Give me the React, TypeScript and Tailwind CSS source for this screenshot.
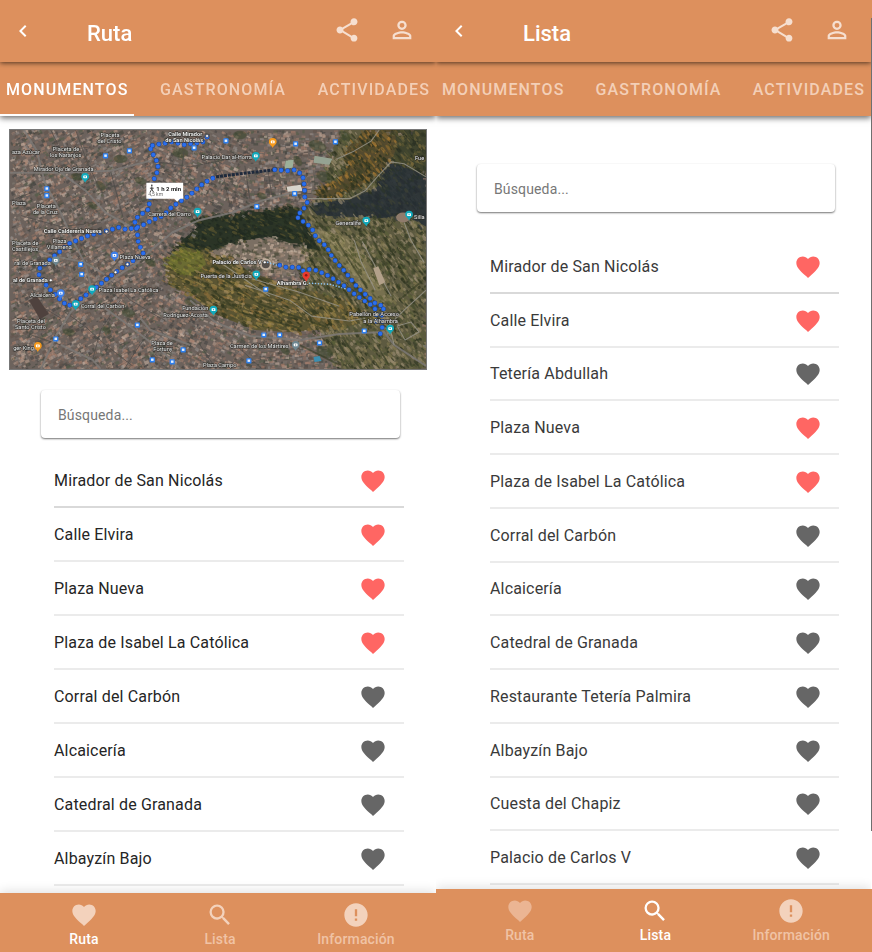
import React from "react";
import {
  MdChevronLeft,
  MdShare,
  MdPersonOutline,
  MdFavorite,
  MdSearch,
  MdError,
} from "react-icons/md";

type Point = [number, number];
type Place = { name: string; liked: boolean };

/* ---------- Map drawing ---------- */

const MAP = { x: 9, y: 129, w: 418, h: 240 };

const zones: { shape: Point[]; base: string; palette: string[]; round: boolean }[] = [
  {
    // eastern hills
    shape: [[345, 129], [427, 129], [427, 370], [340, 370], [325, 345], [290, 240], [305, 205], [330, 190], [325, 160]],
    base: "#5d5a40",
    palette: ["#343a26", "#80774f", "#474d2f", "#8f8360", "#9a8c71", "#2c331e", "#5a6039", "#6d684a"],
    round: true,
  },
  {
    // autumn slope
    shape: [[345, 150], [366, 129], [398, 129], [400, 145], [385, 168], [365, 185], [330, 200], [310, 192], [335, 180], [348, 168]],
    base: "#544a2e",
    palette: ["#8c6a2e", "#2c321f", "#6f5b30", "#3e4127", "#a87a34", "#252c1c", "#4a4a2c"],
    round: true,
  },
  {
    // northern woods on the right
    shape: [[395, 129], [427, 129], [427, 178], [392, 161], [398, 145]],
    base: "#3f432e",
    palette: ["#2f3525", "#64603a", "#7a6a3c", "#262c20", "#484b30", "#54522f"],
    round: true,
  },
  {
    // shaded valley
    shape: [[392, 161], [427, 175], [427, 226], [405, 214], [380, 218], [345, 216], [318, 215], [308, 203], [350, 199], [375, 188]],
    base: "#2f3638",
    palette: ["#262d31", "#333b3d", "#2b342b", "#3d4234", "#272f33", "#2a3236"],
    round: true,
  },
  {
    // terraced gardens
    shape: [[305, 226], [350, 236], [368, 262], [392, 300], [378, 304], [345, 270], [318, 240]],
    base: "#77704f",
    palette: ["#8b8358", "#5c5f38", "#a09370", "#474c2b", "#7c7650", "#94895f"],
    round: true,
  },
  {
    // north bank of the palace hill
    shape: [[192, 217], [232, 213], [262, 208], [298, 205], [308, 228], [320, 250], [300, 246], [268, 239], [235, 244], [212, 250], [190, 250], [166, 256], [182, 240], [198, 226]],
    base: "#2b3426",
    palette: ["#202a1f", "#333e28", "#5c562f", "#1f2820", "#2d3828", "#283229"],
    round: true,
  },
  {
    // wood south of the palace
    shape: [[163, 262], [185, 248], [225, 252], [250, 272], [300, 288], [345, 300], [375, 318], [345, 328], [290, 332], [255, 330], [215, 314], [192, 296], [168, 284]],
    base: "#5b5533",
    palette: ["#85753a", "#3d4127", "#9c854a", "#2d331c", "#69603a", "#a1895d", "#4c4b2e", "#8d6f3b"],
    round: true,
  },
  {
    // bright grove on the west tip
    shape: [[164, 258], [182, 246], [202, 250], [206, 264], [192, 276], [176, 272]],
    base: "#6b6c33",
    palette: ["#84823a", "#5d6426", "#96893c", "#454d20", "#727531", "#59552f"],
    round: true,
  },
  {
    // palace buildings
    shape: [[208, 252], [232, 242], [268, 236], [303, 246], [306, 256], [290, 276], [262, 272], [245, 262]],
    base: "#7b6f63",
    palette: ["#c4ae9d", "#94806f", "#4e4f3b", "#cdb9a8", "#3d4230", "#a38b7a", "#5f5a49"],
    round: false,
  },
];

const cityPalette = [
  "#a2806f", "#716864", "#474544", "#b39887", "#8b7062", "#8f8986", "#c0ab9c", "#43473f", "#62544c", "#a67c69", "#555e4a", "#7b736b",
];

function inside([px, py]: Point, shape: Point[]) {
  let hit = false;
  for (let i = 0, j = shape.length - 1; i < shape.length; j = i++) {
    const [xi, yi] = shape[i];
    const [xj, yj] = shape[j];
    if (yi > py !== yj > py && px < ((xj - xi) * (py - yi)) / (yj - yi) + xi) hit = !hit;
  }
  return hit;
}

function makeTerrain() {
  let seed = 4211;
  const rand = () => {
    seed = (seed * 1664525 + 1013904223) % 4294967296;
    return seed / 4294967296;
  };
  const shapes: React.ReactNode[] = [];
  for (let i = 0; i < 14000; i++) {
    const x = MAP.x + rand() * MAP.w;
    const y = MAP.y + rand() * MAP.h;
    const probe: Point = [x + (rand() - 0.5) * 9, y + (rand() - 0.5) * 7];
    let zone = undefined as (typeof zones)[number] | undefined;
    for (const z of zones) if (inside(probe, z.shape)) zone = z;
    const palette = zone ? zone.palette : cityPalette;
    const fill = palette[Math.floor(rand() * palette.length)];
    if (zone && zone.round) {
      shapes.push(
        <ellipse
          key={i}
          cx={x}
          cy={y}
          rx={1 + rand() * 2.6}
          ry={0.6 + rand() * 1.1}
          fill={fill}
          opacity={0.65}
          transform={`rotate(${x > 300 ? 50 : 25} ${x} ${y})`}
        />,
      );
    } else {
      const angle = x < 150 ? -32 : x < 250 ? 18 : -8;
      shapes.push(
        <rect
          key={i}
          x={x}
          y={y}
          width={1.4 + rand() * 3.6}
          height={1.2 + rand() * 2.4}
          fill={fill}
          opacity={0.62}
          transform={`rotate(${angle + rand() * 12} ${x} ${y})`}
        />,
      );
    }
  }
  return shapes;
}

const terrain = makeTerrain();

const streets = [
  "M23 129 L36 150 L44 182 L60 212 L74 244 L84 262",
  "M9 172 L60 172 L110 170 L150 160",
  "M60 172 L85 190 L105 212 L130 226",
  "M9 240 L50 255 L84 262 L104 274",
  "M84 262 L92 292 L70 312 L55 336 L40 369",
  "M100 305 L128 325 L160 350 L180 369",
  "M60 345 L92 360 L100 369",
  "M150 250 L172 232 L198 220 L232 212 L262 200 L300 190",
  "M150 250 L135 264 L104 284 L90 296",
  "M190 300 L215 322 L250 336 L300 340 L340 334 L385 332 L395 345 L427 366",
  "M140 318 L150 330 L190 345",
];

const alleys = [
  "M75 129 L86 160 L100 190 M9 200 L36 190 M50 129 L60 150 L90 146",
  "M110 170 L118 200 L124 222 M150 160 L190 166 L230 158 M180 180 L184 150",
  "M20 215 L60 226 L100 222 M30 300 L60 318 M110 240 L124 252 L112 268",
  "M210 150 L224 178 L230 205 M245 165 L250 198 M268 168 L272 194",
  "M104 274 L130 300 L160 318 M120 300 L100 330 L92 360 M150 330 L136 350 L124 369",
  "M64 312 L84 326 L104 344 L132 366 M30 335 L60 345 M200 345 L216 369 M236 345 L262 369",
];

const trails = [
  "M308 198 L350 198 L366 190 L378 176 L392 161 L405 163 L427 176",
  "M380 129 L372 140 L355 150 L338 158",
  "M355 240 L362 262 L376 290 M363 241 L376 266 L392 296",
  "M405 222 L412 240 L425 262",
  "M245 285 L290 300 L312 316 L350 321 L366 318",
  "M220 262 L252 284 L270 296 M250 278 L300 292 L340 306",
  "M395 345 L390 325 L405 310 L427 290",
  "M398 326 L412 322 L420 332 L406 340 L398 326",
];

const groves: { at: Point; r: number }[] = [
  { at: [120, 158], r: 7 }, { at: [100, 185], r: 6 }, { at: [76, 176], r: 6 }, { at: [180, 152], r: 8 },
  { at: [140, 180], r: 6 }, { at: [92, 205], r: 5 }, { at: [128, 313], r: 7 }, { at: [150, 262], r: 6 },
  { at: [240, 134], r: 7 }, { at: [318, 145], r: 9 }, { at: [325, 176], r: 9 }, { at: [262, 195], r: 5 },
  { at: [345, 135], r: 7 }, { at: [298, 160], r: 6 }, { at: [68, 332], r: 6 }, { at: [106, 330], r: 5 },
  { at: [190, 302], r: 6 }, { at: [195, 290], r: 6 }, { at: [325, 352], r: 9 }, { at: [285, 350], r: 6 },
];

const routes = [
  "M207 136 L202 142 L194 142 L185 144 L172 141 L161 143 L149 145 L153 154 L158 163 L157 171 L153 180 L149 202 L149 208 L134 219 L137 233 L138 243 L143 253 L133 260 L115 272 L92 290 L74 303 L67 306 L59 299 L48 288 L38 276 L39 268 L53 256 L69 243 L88 235 L111 229 L118 227 L126 229 L140 226 L151 220 L163 215 L172 206 L189 195 L204 182 L216 176",
  "M275 169 L288 170 L295 169 L303 174 L305 187 L305 196 L308 201 L305 207 L297 216 L302 220 L312 227 L317 238 L327 246 L333 257 L346 272 L358 287 L377 304 L385 306 L382 317 L384 324 L381 334",
  "M280 265 L286 267 L299 267 L302 271 L307 269 L317 270 L328 275 L344 285 L354 293 L364 300 L372 305 L377 310 L377 323",
];

const stops: Point[] = [
  [105, 155], [129, 150], [194, 147], [46, 188], [46, 195], [226, 140], [296, 143], [336, 141], [295, 193], [257, 206],
  [80, 264], [81, 274], [137, 325], [55, 339], [152, 360], [183, 350], [172, 362], [266, 289], [264, 335], [280, 335],
  [320, 343], [365, 331], [249, 361],
];

const pins: { at: Point; color: string }[] = [
  { at: [84.5, 176], color: "#11a9bb" },
  { at: [197.5, 211], color: "#11a9bb" },
  { at: [256, 155], color: "#11a9bb" },
  { at: [273, 141], color: "#f69a1c" },
  { at: [367, 220], color: "#11a9bb" },
  { at: [410, 214], color: "#11a9bb" },
  { at: [114, 255], color: "#3f7fe8" },
  { at: [60, 293], color: "#3f7fe8" },
  { at: [55, 260], color: "#6e8790" },
  { at: [91.5, 289], color: "#11a9bb" },
  { at: [75, 304], color: "#11a9bb" },
  { at: [37, 346], color: "#f69a1c" },
  { at: [213.5, 309.5], color: "#11a9bb" },
  { at: [256.5, 274], color: "#11a9bb" },
  { at: [296, 345], color: "#6e8790" },
  { at: [391, 328.5], color: "#11a9bb" },
];

const labels: { text: string; x: number; y: number; bold?: boolean; end?: boolean }[] = [
  { text: "Calle Mirador", x: 168, y: 135, bold: true },
  { text: "de San Nicolás", x: 165, y: 141, bold: true },
  { text: "Placeta", x: 100, y: 136 },
  { text: "del Cristo", x: 97, y: 142 },
  { text: "aza Azúcar", x: 39, y: 153, end: true },
  { text: "Placeta de", x: 52, y: 150 },
  { text: "los Naranjos", x: 49, y: 156 },
  { text: "Mirador Ojo de Granada", x: 33, y: 170 },
  { text: "Placeta", x: 36, y: 207 },
  { text: "de la Cruz", x: 32, y: 213 },
  { text: "Plaza", x: 11, y: 204 },
  { text: "Calle Calderería Nueva", x: 43, y: 233, bold: true },
  { text: "Placeta de", x: 11, y: 245 },
  { text: "Castillejos", x: 11, y: 251 },
  { text: "Plaza", x: 52, y: 243 },
  { text: "Villamena", x: 46, y: 249 },
  { text: "ral de Granada", x: 50, y: 265, end: true },
  { text: "al de Granada", x: 47, y: 282, bold: true, end: true },
  { text: "Alcaicería", x: 54, y: 297, end: true },
  { text: "Plaza Nueva", x: 119, y: 259 },
  { text: "Plaza Isabel La Católica", x: 98, y: 292 },
  { text: "Corral del Carbón", x: 80, y: 308 },
  { text: "Placeta del", x: 16, y: 323 },
  { text: "Santo Cristo", x: 14, y: 329 },
  { text: "ger King", x: 33, y: 350, end: true },
  { text: "Carrera del Darro", x: 148, y: 215 },
  { text: "Palacio Dar al-Horra", x: 252, y: 158, end: true },
  { text: "Generalife", x: 336, y: 224 },
  { text: "Silla", x: 415, y: 218 },
  { text: "Fue", x: 416, y: 159 },
  { text: "Palacio de Carlos V", x: 262, y: 264, bold: true, end: true },
  { text: "Puerta de la Justicia", x: 252, y: 278, end: true },
  { text: "Alhambra G.", x: 277, y: 285, bold: true },
  { text: "Fundación", x: 182, y: 310 },
  { text: "Rodríguez-Acosta", x: 163, y: 317 },
  { text: "Pabellón de Acceso", x: 350, y: 316 },
  { text: "a la Alhambra", x: 364, y: 323 },
  { text: "Carmen de los Mártires", x: 230, y: 348 },
  { text: "Plaza de", x: 151, y: 345 },
  { text: "Fortuny", x: 153, y: 351 },
  { text: "Plaza Campo", x: 203, y: 367 },
];

const toPoints = (shape: Point[]) => shape.map((p) => p.join(",")).join(" ");

function RouteMap() {
  return (
    <svg
      viewBox="9 129 418 240"
      preserveAspectRatio="xMidYMid slice"
      role="img"
      aria-label="Mapa de la ruta por Granada"
      className="block w-full border border-[#777777] font-['Roboto',sans-serif]"
    >
      <rect x={9} y={129} width={418} height={241} fill="#6c625c" />
      {zones.map((z, i) => (
        <polygon key={i} points={toPoints(z.shape)} fill={z.base} />
      ))}
      {terrain}
      <g fill="#3a452b" opacity={0.55}>
        {groves.map(({ at: [x, y], r }) => (
          <ellipse key={`${x}-${y}`} cx={x} cy={y} rx={r} ry={r * 0.6} transform={`rotate(${x % 60} ${x} ${y})`} />
        ))}
      </g>
      <g fill="none" stroke="#4f4c49" strokeWidth={1} opacity={0.75}>
        {alleys.map((d) => <path key={d} d={d} />)}
      </g>
      <g fill="none" stroke="#7d7976" strokeWidth={2} opacity={0.85} strokeLinejoin="round">
        {streets.map((d) => <path key={d} d={d} />)}
      </g>
      <g fill="none" stroke="#98958a" strokeWidth={1.1} opacity={0.8} strokeLinejoin="round">
        {trails.map((d) => <path key={d} d={d} />)}
      </g>
      <path
        d="M316 246 L368 326 M325 242 L372 306 M336 238 L368 288 M372 236 L400 290 M384 236 L408 280 M396 235 L424 275 M300 345 L340 365 M345 340 L362 365 M400 300 L424 280 M378 345 L390 366 M220 276 L260 304 L330 328 M200 280 L240 312 L300 328"
        fill="none"
        stroke="#30361f"
        strokeWidth={1.8}
        opacity={0.55}
      />
      <polygon points="286,160 294,159 293,167 285,168" fill="#9db09a" />
      <polygon points="315,155 333,158 330,164 314,162" fill="#95a292" />
      <polygon points="287,186 301,184 303,190 288,191" fill="#d8d4cb" />
      <polygon points="374,268 379,266 386,282 380,285" fill="#b3a18a" />
      <ellipse cx={404} cy={217} rx={7} ry={5} fill="#8f7b6c" />
      <circle cx={266} cy={264} r={5} fill="#56504b" stroke="#c1b09e" strokeWidth={2} />
      <polygon points="28,300 36,296 48,314 39,319" fill="#4f423e" />
      <polygon points="314,357 320,356 322,361 315,362" fill="#3c8fb0" />
      <path d="M268 262 L278 265 M310 283 L330 284 L348 289" fill="none" stroke="#8ec5f5" strokeWidth={1.6} strokeDasharray="0 3" strokeLinecap="round" />
      <path d="M216 176 L240 173 L275 169" fill="none" stroke="#1f2a3c" strokeWidth={3} strokeDasharray="3 1" />
      <g fill="none" strokeLinecap="round" strokeDasharray="0 6.5">
        {routes.map((d) => (
          <g key={d}>
            <path d={d} stroke="#1a459c" strokeWidth={5} />
            <path d={d} stroke="#2b6fee" strokeWidth={4} />
          </g>
        ))}
      </g>
      {stops.map(([x, y]) => (
        <g key={`${x}-${y}`}>
          <rect x={x - 2.6} y={y - 2.6} width={5.2} height={5.2} rx={0.8} fill="#2d7fee" />
          <rect x={x - 1.3} y={y - 1.4} width={2.6} height={2.4} fill="#e4effd" />
        </g>
      ))}
      {[[207, 135], [106, 231], [50, 280], [127, 264], [115, 272], [265, 262]].map(([x, y]) => (
        <circle key={`${x}-${y}`} cx={x} cy={y} r={1.5} fill="#ffffff" stroke="#333333" strokeWidth={0.6} />
      ))}
      {pins.map(({ at: [x, y], color }) => (
        <g key={`${x}-${y}`}>
          <path d={`M${x - 3.9} ${y} a3.9 3.9 0 1 1 7.8 0 c0 2.4 -2.6 3 -3.9 6 c-1.3 -3 -3.9 -3.6 -3.9 -6z`} fill={color} />
          <rect x={x - 1.9} y={y - 1.4} width={3.8} height={2.8} rx={0.6} fill="#ffffff" />
          <circle cx={x} cy={y} r={0.7} fill={color} />
        </g>
      ))}
      <path d="M303 275 a3.6 3.6 0 1 1 7.2 0 c0 2.6 -2.4 3.4 -3.6 7 c-1.2 -3.6 -3.6 -4.4 -3.6 -7z" fill="#ea3a2e" />
      <circle cx={306.6} cy={275} r={1.3} fill="#8f1712" />
      <g fill="#ededeb" stroke="#2a2a28" strokeWidth={1.1} paintOrder="stroke" fontSize={5.7}>
        {labels.map((l) => (
          <text key={l.text + l.y} x={l.x} y={l.y} fontWeight={l.bold ? 700 : 400} textAnchor={l.end ? "end" : "start"}>
            {l.text}
          </text>
        ))}
      </g>
      <path d="M146 182 h37 v16 h-3 l-3 3 l-3 -3 h-28z" fill="#ffffff" />
      <path d="M151.5 186 v2.5 l-1.5 2.5 M151.5 188.5 l1.5 2.5 M150 187.5 h3" fill="none" stroke="#333333" strokeWidth={0.9} strokeLinecap="round" />
      <circle cx={151.5} cy={184.6} r={0.8} fill="#333333" />
      <text x={156} y={190} fontSize={6} fontWeight={700} fill="#222222">1 h 2 min</text>
      <text x={148} y={195} fontSize={5} fill="#666666">4,5 km</text>
    </svg>
  );
}

/* ---------- App screens ---------- */

function Header({ title }: { title: string }) {
  return (
    <header className="relative z-20 flex h-[62px] items-center bg-[#dd905d] pl-[11px] pr-5 shadow-[0_1px_5px_rgba(0,0,0,0.65)]">
      <button type="button" aria-label="Volver" className="text-white">
        <MdChevronLeft size={24} />
      </button>
      <h1 className="ml-[52px] flex-1 pt-1.5 text-[22px] font-medium leading-7 text-white">{title}</h1>
      <div className="flex gap-[27px] pb-0.5 text-[#f6dfd0]">
        <button type="button" aria-label="Compartir"><MdShare size={28} /></button>
        <button type="button" aria-label="Perfil"><MdPersonOutline size={28} /></button>
      </div>
    </header>
  );
}

function Tabs({ active }: { active?: string }) {
  return (
    <nav className="relative z-10 flex h-[54px] justify-between bg-[#dd905d] shadow-[0_2px_6px_rgba(0,0,0,0.6)]">
      {["Monumentos", "Gastronomía", "Actividades"].map((t) => (
        <button
          key={t}
          type="button"
          className={`border-b-2 px-1.5 pt-1 text-base font-medium uppercase tracking-[0.07em] ${
            t === active ? "border-white text-white" : "border-transparent text-[#f3cfb7]"
          }`}
        >
          {t}
        </button>
      ))}
    </nav>
  );
}

function Search({ id }: { id: string }) {
  return (
    <div className="pl-[41px] pr-9">
      <input
        id={id}
        type="text"
        aria-label="Búsqueda"
        placeholder="Búsqueda..."
        className="block h-12 w-full rounded-sm bg-white px-[17px] pt-0.5 text-sm tracking-[0.01em] text-gray-700 shadow-[0_1px_2px_rgba(0,0,0,0.55)] outline-none placeholder:text-[#777777]"
      />
    </div>
  );
}

function PlaceList({ places, compact = false }: { places: Place[]; compact?: boolean }) {
  return (
    <ul className="ml-[54px] mr-8 grid flex-1 auto-rows-fr">
      {places.map((p, i) => (
        <li
          key={p.name}
          className={`flex min-h-12 items-center justify-between border-b-2 pt-0.5 pr-[17px] text-base tracking-[0.01em] ${
            compact ? "text-[#3a3a3a]" : "text-[#252525]"
          } ${i === 0 ? "border-[#d9d9d9]" : "border-[#ebebeb]"}`}
        >
          {p.name}
          <button
            type="button"
            aria-label={`Favorito: ${p.name}`}
            aria-pressed={p.liked}
            className={p.liked ? "text-[#ff6663]" : "text-[#666666]"}
          >
            <MdFavorite size={28} />
          </button>
        </li>
      ))}
    </ul>
  );
}

const navItems = [
  { name: "Ruta", Icon: MdFavorite },
  { name: "Lista", Icon: MdSearch },
  { name: "Información", Icon: MdError },
];

function BottomNav({ active, tall = false }: { active: string; tall?: boolean }) {
  return (
    <nav
      className={`relative z-10 grid grid-cols-3 bg-[#dd905d] pl-4 pr-3 pt-2 shadow-[0_-2px_10px_rgba(0,0,0,0.12)] ${
        tall ? "h-[63px]" : "h-[59px]"
      }`}
    >
      {navItems.map(({ name, Icon }) => {
        const current = name === active;
        const iconColor = tall && current ? "text-white" : tall && name === "Ruta" ? "text-[#ebb593]" : "text-[#f3d2bc]";
        return (
          <button key={name} type="button" className="flex flex-col items-center">
            <Icon size={28} className={iconColor} />
            <span className={`text-sm font-medium leading-5 tracking-[0.01em] ${current ? "text-white" : "text-[#f0c3a5]"}`}>
              {name}
            </span>
          </button>
        );
      })}
    </nav>
  );
}

const place = (name: string, liked = false): Place => ({ name, liked });

const routePlaces = [
  place("Mirador de San Nicolás", true),
  place("Calle Elvira", true),
  place("Plaza Nueva", true),
  place("Plaza de Isabel La Católica", true),
  place("Corral del Carbón"),
  place("Alcaicería"),
  place("Catedral de Granada"),
  place("Albayzín Bajo"),
];

const listPlaces = [
  place("Mirador de San Nicolás", true),
  place("Calle Elvira", true),
  place("Tetería Abdullah"),
  place("Plaza Nueva", true),
  place("Plaza de Isabel La Católica", true),
  place("Corral del Carbón"),
  place("Alcaicería"),
  place("Catedral de Granada"),
  place("Restaurante Tetería Palmira"),
  place("Albayzín Bajo"),
  place("Cuesta del Chapiz"),
  place("Palacio de Carlos V"),
];

export default function App() {
  return (
    <div className="grid min-h-screen grid-cols-2 bg-white font-['Roboto',sans-serif]">
      <section className="flex min-w-0 flex-col overflow-hidden">
        <Header title="Ruta" />
        <Tabs active="Monumentos" />
        <main className="flex flex-1 flex-col pb-[7px]">
          <div className="mb-5 px-[9px] pt-[13px]">
            <RouteMap />
          </div>
          <Search id="busqueda-ruta" />
          <div className="h-4" />
          <PlaceList places={routePlaces} />
        </main>
        <BottomNav active="Ruta" />
      </section>
      <section className="flex min-w-0 overflow-hidden">
        <div className="flex min-w-0 flex-1 flex-col overflow-hidden">
          <Header title="Lista" />
          <Tabs />
          <main className="flex flex-1 flex-col pb-1 pt-12">
            <Search id="busqueda-lista" />
            <div className="h-7" />
            <PlaceList places={listPlaces} compact />
          </main>
          <BottomNav active="Lista" tall />
        </div>
        <div className="flex w-px flex-col">
          <div className="h-[18px] bg-[#dd905d]" />
          <div className="flex-1 bg-[#6f6f6f]" />
          <div className="h-[58px]" />
          <div className="h-[63px] bg-[#dd905d]" />
        </div>
      </section>
    </div>
  );
}
